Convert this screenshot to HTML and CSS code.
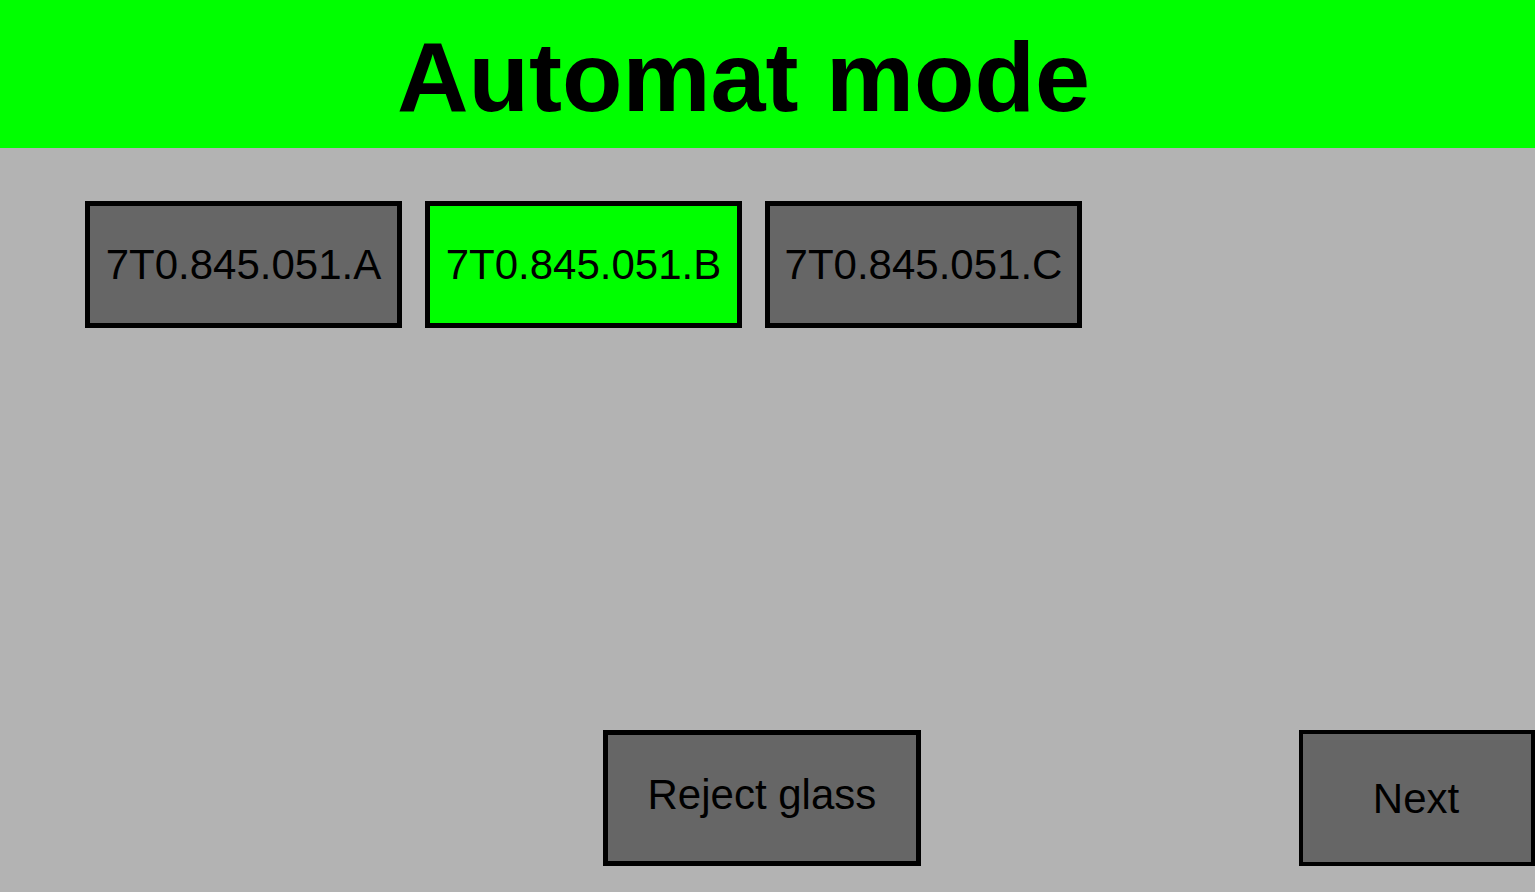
FILE: index.html
```
<!DOCTYPE html>
<html lang="en">
<head>
<meta charset="utf-8">
<title>Automat mode</title>
<link rel="stylesheet" href="styles.css">
</head>
<body>
<div class="screen">
<header class="banner"><h1 class="title">Automat mode</h1></header>
<main class="parts">
<button class="btn part" type="button">7T0.845.051.A</button>
<button class="btn part active" type="button" aria-pressed="true">7T0.845.051.B</button>
<button class="btn part" type="button">7T0.845.051.C</button>
</main>
<footer class="actions">
<button class="btn reject" type="button">Reject glass</button>
<button class="btn next" type="button">Next</button>
</footer>
</div>
</body>
</html>
```
FILE: styles.css
```
* { box-sizing: border-box; }
body {
  margin: 0;
  background: #b3b3b3;
  color: #000;
  font-family: "Liberation Sans", Arial, sans-serif;
}
.screen {
  min-height: 100vh;
  display: flex;
  flex-direction: column;
}
.banner {
  background: #00ff00;
  padding: 21px 48px 15px 0;
  text-align: center;
}
.title {
  margin: 0;
  font-size: 99px;
  line-height: 112px;
  font-weight: bold;
}
.parts {
  flex: 1;
  display: flex;
  flex-wrap: wrap;
  align-content: flex-start;
  gap: 23px;
  padding: 53px 85px;
}
.btn {
  border: 5px solid #000;
  background: #666;
  color: #000;
  font-family: inherit;
  font-size: 42px;
  line-height: 48px;
  padding: 0;
  white-space: nowrap;
}
.part {
  width: 317px;
  height: 127px;
}
.active { background: #00ff00; }
.actions {
  display: grid;
  grid-template-columns: 54fr 318px 55fr;
  padding-bottom: 26px;
}
.reject {
  grid-column: 2;
  height: 136px;
  padding-bottom: 6px;
}
.next {
  justify-self: end;
  width: 236px;
  height: 136px;
  border-width: 4px;
  padding: 2px 2px 0 0;
}
```
